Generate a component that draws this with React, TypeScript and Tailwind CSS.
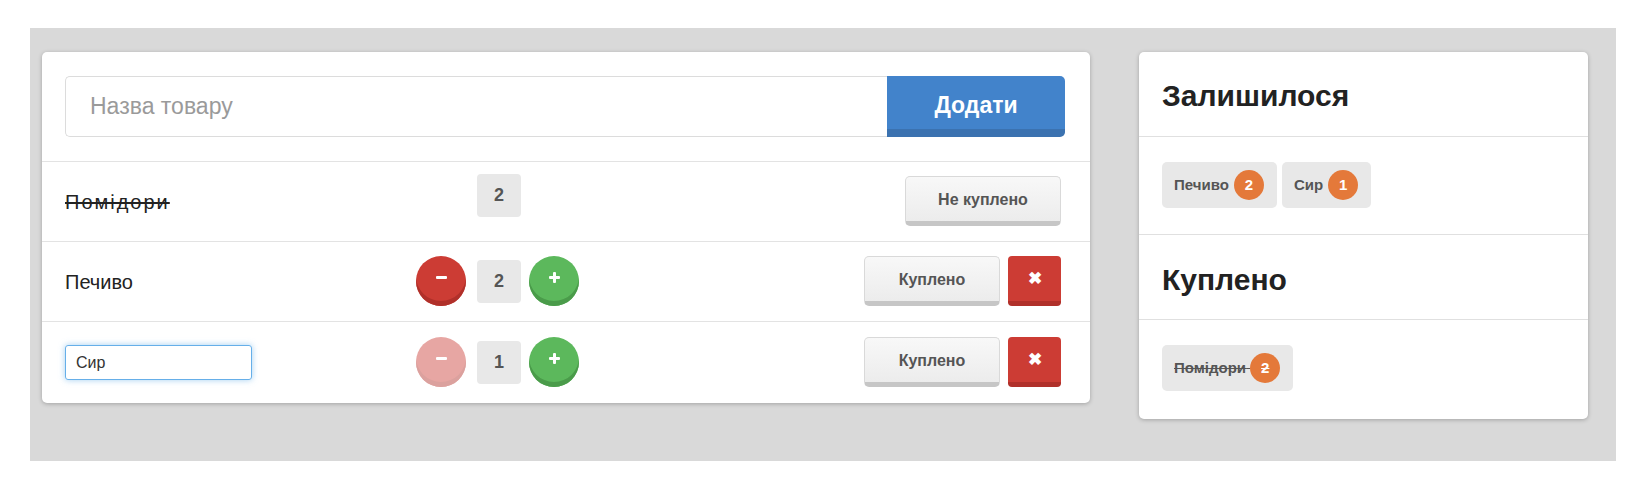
import React from 'react';

type Item = { name: string; qty: number; bought: boolean; editing?: boolean };

const items: Item[] = [
  { name: 'Помідори', qty: 2, bought: true },
  { name: 'Печиво', qty: 2, bought: false },
  { name: 'Сир', qty: 1, bought: false, editing: true },
];

function RoundBtn({ kind, disabled }: { kind: 'minus' | 'plus'; disabled?: boolean }) {
  const color =
    kind === 'minus'
      ? 'bg-[#cc3c34] shadow-[inset_0_-5px_0_#b0302a]'
      : 'bg-[#5cb85c] shadow-[inset_0_-5px_0_#4a9b4a]';
  return (
    <button
      className={`mb-[2px] flex h-[50px] w-[50px] items-center justify-center rounded-full pb-[6px] ${color} ${disabled ? 'opacity-45' : ''}`}
    >
      {kind === 'minus' ? (
        <span className="block h-[3px] w-[11px] rounded-[1px] bg-white" />
      ) : (
        <span className="relative block h-[11px] w-[11px]">
          <span className="absolute left-0 top-[4px] h-[3px] w-[11px] rounded-[1px] bg-white" />
          <span className="absolute left-[4px] top-0 h-[11px] w-[3px] rounded-[1px] bg-white" />
        </span>
      )}
    </button>
  );
}

function Count({ n, raised }: { n: number; raised?: boolean }) {
  return (
    <div
      className={`flex h-[43px] w-[44px] items-center justify-center rounded-[4px] bg-[#e8e8e8] text-[18px] font-bold text-[#555] ${raised ? 'mb-[12px]' : ''}`}
    >
      {n}
    </div>
  );
}

function GrayBtn({ label, w }: { label: string; w: string }) {
  return (
    <button
      className={`mb-[2px] flex h-[50px] ${w} items-center justify-center rounded-[5px] border border-b-[5px] border-[#d9d9d9] border-b-[#c6c6c6] bg-gradient-to-b from-[#f8f8f8] to-[#ececec] pt-[3px] text-[16px] font-bold text-[#555]`}
    >
      {label}
    </button>
  );
}

function Row({ item, last }: { item: Item; last: boolean }) {
  return (
    <div
      className={`flex items-center pl-[23px] pr-[29px] ${last ? 'h-[81px]' : 'h-[80px] border-b border-[#e3e3e3]'}`}
    >
      <div className="w-[351px]">
        {item.editing ? (
          <input
            defaultValue={item.name}
            className="h-[35px] w-[187px] rounded-[3px] border border-[#66afe9] px-[10px] text-[16px] text-[#333] shadow-[0_0_6px_rgba(102,175,233,0.6)] outline-none"
          />
        ) : item.bought ? (
          <span className="text-[20px] tracking-[2px] text-[#222] line-through">{item.name}</span>
        ) : (
          <span className="text-[20px] text-[#222]">{item.name}</span>
        )}
      </div>
      <div className="flex items-center">
        {item.bought ? <div className="w-[50px]" /> : <RoundBtn kind="minus" disabled={item.qty <= 1} />}
        <div className="ml-[11px]">
          <Count n={item.qty} raised={item.bought} />
        </div>
        {!item.bought && (
          <div className="ml-[8px]">
            <RoundBtn kind="plus" />
          </div>
        )}
      </div>
      <div className="ml-auto flex items-center gap-[8px]">
        {item.bought ? (
          <GrayBtn label="Не куплено" w="w-[156px]" />
        ) : (
          <>
            <GrayBtn label="Куплено" w="w-[136px]" />
            <button className="mb-[2px] flex h-[50px] w-[53px] items-center justify-center rounded-[4px] border-b-[5px] border-b-[#b0302a] bg-[#cc3c34] pt-[2px] text-[17px] font-bold text-white">
              ✖
            </button>
          </>
        )}
      </div>
    </div>
  );
}

function Pill({ name, qty, struck }: { name: string; qty: number; struck?: boolean }) {
  return (
    <div className="flex h-[46px] items-center rounded-[5px] bg-[#e8e8e8] pl-[12px] pr-[13px] text-[15px] font-bold text-[#555]">
      <span className={struck ? 'line-through' : ''}>
        {name}
        {struck ? '\u00a0' : ''}
      </span>
      <span
        className={`${struck ? 'ml-0' : 'ml-[5px]'} flex h-[30px] w-[30px] items-center justify-center rounded-full bg-[#e4793a] text-[15px] font-bold text-white ${struck ? 'line-through' : ''}`}
      >
        {qty}
      </span>
    </div>
  );
}

export default function App() {
  return (
    <div className="min-h-[500px] bg-white pl-[30px] pt-[28px] font-['Liberation_Sans',Arial,sans-serif]">
      <div className="flex h-[433px] w-[1586px] items-start gap-[49px] bg-[#d9d9d9] pl-[12px] pt-[24px]">
        {/* list card */}
        <div className="w-[1048px] rounded-[5px] bg-white shadow-[0_1px_4px_rgba(0,0,0,0.25)]">
          <div className="flex border-b border-[#e3e3e3] py-[24px] pl-[23px] pr-[25px]">
            <input
              placeholder="Назва товару"
              className="h-[61px] flex-1 rounded-l-[5px] border border-r-0 border-[#dcdcdc] px-[24px] text-[23px] text-[#333] outline-none placeholder:text-[#9a9a9a]"
            />
            <button className="h-[61px] w-[178px] rounded-r-[5px] border-b-[8px] border-b-[#3b72b0] bg-[#4283cb] pt-[6px] text-[23px] font-bold text-white">
              Додати
            </button>
          </div>
          {items.map((it, i) => (
            <Row key={it.name} item={it} last={i === items.length - 1} />
          ))}
        </div>

        {/* summary card */}
        <div className="w-[449px] rounded-[5px] bg-white shadow-[0_1px_4px_rgba(0,0,0,0.25)]">
          <div className="flex h-[85px] items-center border-b border-[#e0e0e0] pl-[23px] pt-[2px]">
            <h2 className="text-[30px] font-bold text-[#222]">Залишилося</h2>
          </div>
          <div className="flex h-[98px] items-start gap-[5px] border-b border-[#e0e0e0] pl-[23px] pt-[25px]">
            <Pill name="Печиво" qty={2} />
            <Pill name="Сир" qty={1} />
          </div>
          <div className="flex h-[85px] items-center border-b border-[#e0e0e0] pl-[23px] pt-[4px]">
            <h2 className="text-[30px] font-bold text-[#222]">Куплено</h2>
          </div>
          <div className="flex h-[99px] items-start gap-[5px] pl-[23px] pt-[25px]">
            <Pill name="Помідори" qty={2} struck />
          </div>
        </div>
      </div>
    </div>
  );
}
